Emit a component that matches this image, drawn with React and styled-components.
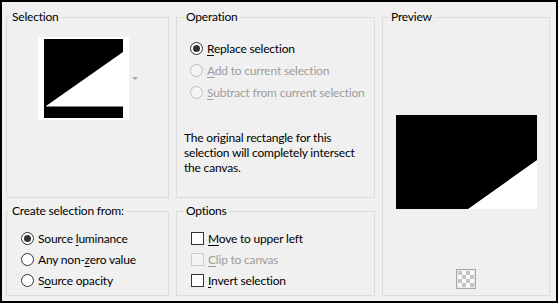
import React from 'react';
import styled, { createGlobalStyle } from 'styled-components';

const GlobalStyle = createGlobalStyle`
  html, body {
    margin: 0;
    padding: 0;
    background: #f0f0f0;
  }
  body {
    font-family: Lato, "Noto Sans", sans-serif;
    font-size: 12px;
    letter-spacing: -0.2px;
    color: #000;
  }
`;

const Dialog = styled.div`
  width: 558px;
  height: 303px;
  box-sizing: border-box;
  border: 2px solid #000;
  background: #f0f0f0;
  padding: 7px 6px 0 4px;
  display: grid;
  grid-template-columns: 163px 199px 168px;
  grid-template-rows: 189px 93px;
  column-gap: 7px;
  row-gap: 5px;
`;

const Group = styled.fieldset`
  margin: 0;
  padding: 0;
  min-width: 0;
  border: 1px solid #dcdcdc;
  display: flex;
  flex-direction: column;
  grid-column: ${(p) => p.$col};
  grid-row: ${(p) => p.$row};
`;

const Legend = styled.legend`
  margin-left: ${(p) => p.$indent}px;
  padding: 0 2px;
  line-height: 16px;
  height: 16px;
  white-space: nowrap;
`;

const ThumbRow = styled.div`
  margin-top: 12px;
  display: flex;
  justify-content: center;
  align-items: center;
  gap: 3px;
`;

const Thumb = styled.div`
  background: #fff;
  padding: 2px 6px;
  display: flex;
  svg {
    display: block;
  }
`;

const DropArrow = styled.span`
  width: 0;
  height: 0;
  border-left: 3px solid transparent;
  border-right: 3px solid transparent;
  border-top: 3px solid #a8a8a8;
`;

const OptionList = styled.div`
  margin-top: ${(p) => p.$top}px;
  padding-left: ${(p) => p.$left}px;
  display: flex;
  flex-direction: column;
`;

const OptionRow = styled.label`
  height: ${(p) => p.$h}px;
  display: flex;
  align-items: center;
  gap: 4px;
  white-space: nowrap;
  color: ${(p) => (p.$disabled ? '#9d9d9d' : '#000')};

  u {
    text-underline-offset: 2px;
  }
`;

const RadioMark = styled.span`
  width: 13px;
  height: 13px;
  box-sizing: border-box;
  border-radius: 50%;
  border: 1px solid ${(p) => (p.$disabled ? '#bcbcbc' : '#333')};
  background: ${(p) => (p.$disabled ? '#f4f4f4' : '#fff')};
  display: flex;
  align-items: center;
  justify-content: center;
  flex-shrink: 0;

  &::after {
    content: '';
    width: 7px;
    height: 7px;
    border-radius: 50%;
    background: #333;
    display: ${(p) => (p.$checked ? 'block' : 'none')};
  }
`;

const CheckMark = styled.span`
  width: 13px;
  height: 13px;
  box-sizing: border-box;
  border: 1px solid ${(p) => (p.$disabled ? '#cccccc' : '#333')};
  background: ${(p) => (p.$disabled ? '#f4f4f4' : '#fff')};
  flex-shrink: 0;
`;

const Note = styled.p`
  margin: 27px 0 0;
  padding-left: 7px;
  line-height: 15px;
`;

const PreviewImage = styled.div`
  margin-top: 90px;
  display: flex;
  justify-content: center;
  svg {
    display: block;
  }
`;

const CheckerButton = styled.div`
  margin-top: auto;
  margin-bottom: 6px;
  display: flex;
  justify-content: center;
  svg {
    display: block;
  }
`;

const Radio = ({ checked, disabled, h, children }) => (
  <OptionRow $h={h} $disabled={disabled}>
    <RadioMark $checked={checked} $disabled={disabled} />
    <span>{children}</span>
  </OptionRow>
);

const Check = ({ disabled, children }) => (
  <OptionRow $h={21} $disabled={disabled}>
    <CheckMark $disabled={disabled} />
    <span>{children}</span>
  </OptionRow>
);

const Checker = () => {
  const cells = [];
  for (let r = 0; r < 4; r++) {
    for (let c = 0; c < 4; c++) {
      if ((r + c) % 2 === 0) {
        cells.push(<rect key={`${r}-${c}`} x={2 + c * 4} y={2 + r * 4} width="4" height="4" fill="#c4c4c4" />);
      }
    }
  }
  return (
    <svg width="20" height="20" viewBox="0 0 20 20">
      <rect x="0.5" y="0.5" width="19" height="19" fill="#e8e8e8" stroke="#a8a8a8" />
      <rect x="2" y="2" width="16" height="16" fill="#fafafa" />
      {cells}
    </svg>
  );
};

const App = () => (
  <>
    <GlobalStyle />
    <Dialog>
      <Group $col="1" $row="1">
        <Legend $indent={3}>Selection</Legend>
        <ThumbRow>
          <Thumb>
            <svg width="79" height="79" viewBox="0 0 79 79">
              <rect width="79" height="79" fill="#000" />
              <polygon points="2,67 79,13 79,67" fill="#fff" />
              <line x1="2" y1="67.5" x2="79" y2="67.5" stroke="#808080" />
            </svg>
          </Thumb>
          <DropArrow />
        </ThumbRow>
      </Group>

      <Group $col="2" $row="1">
        <Legend $indent={7}>Operation</Legend>
        <OptionList $top={12} $left={13}>
          <Radio h={22} checked>
            <u>R</u>eplace selection
          </Radio>
          <Radio h={22} disabled>
            <u>A</u>dd to current selection
          </Radio>
          <Radio h={22} disabled>
            <u>S</u>ubtract from current selection
          </Radio>
        </OptionList>
        <Note>
          The original rectangle for this
          <br />
          selection will completely intersect
          <br />
          the canvas.
        </Note>
      </Group>

      <Group $col="3" $row="1 / span 2">
        <Legend $indent={6}>Preview</Legend>
        <PreviewImage>
          <svg width="141" height="94" viewBox="0 0 141 94">
            <rect width="141" height="94" fill="#000" />
            <polygon points="72,94 141,45 141,94" fill="#fff" />
          </svg>
        </PreviewImage>
        <CheckerButton>
          <Checker />
        </CheckerButton>
      </Group>

      <Group $col="1" $row="2">
        <Legend $indent={3}>Create selection from:</Legend>
        <OptionList $top={9} $left={14}>
          <Radio h={21} checked>
            Source <u>l</u>uminance
          </Radio>
          <Radio h={21}>
            Any non-<u>z</u>ero value
          </Radio>
          <Radio h={21}>
            S<u>o</u>urce opacity
          </Radio>
        </OptionList>
      </Group>

      <Group $col="2" $row="2">
        <Legend $indent={7}>Options</Legend>
        <OptionList $top={9} $left={14}>
          <Check>
            <u>M</u>ove to upper left
          </Check>
          <Check disabled>
            <u>C</u>lip to canvas
          </Check>
          <Check>
            <u>I</u>nvert selection
          </Check>
        </OptionList>
      </Group>
    </Dialog>
  </>
);

export default App;
